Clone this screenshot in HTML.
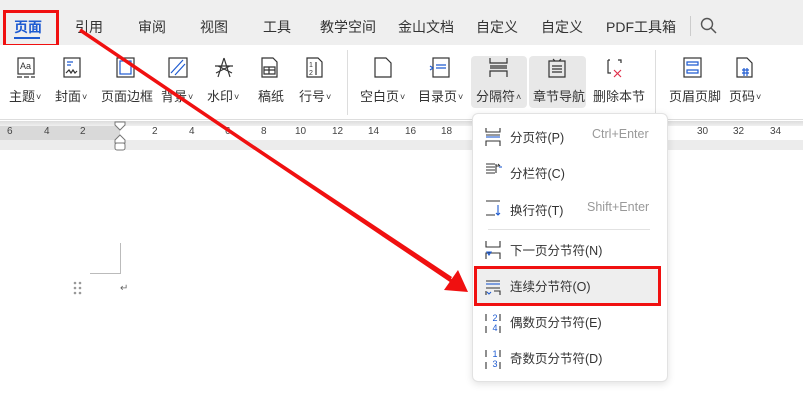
<!DOCTYPE html>
<html><head><meta charset="utf-8"><style>
*{margin:0;padding:0;box-sizing:border-box}
body{width:803px;height:404px;overflow:hidden;background:#fff;font-family:"Liberation Sans","Noto Sans CJK SC",sans-serif;color:#333;position:relative}
.a{position:absolute;white-space:nowrap}
.tab{position:absolute;top:17px;font-size:14px;color:#333}
.lbl{position:absolute;top:86px;font-size:13px;color:#333}
.c{font-size:9px;vertical-align:1px;margin-left:1px}
.num{position:absolute;top:126px;font-size:10px;color:#444}
.mi{position:absolute;left:510px;font-size:12.5px;color:#333}
.sc{position:absolute;font-size:12.5px;color:#999}
.dg{position:absolute;left:490px;font-size:9px;color:#1e5bd1;line-height:10px}
</style></head><body>
<div class="a" style="left:0;top:0;width:803px;height:45px;background:#efefef"></div>
<div class="tab" style="left:14px;color:#1e5bd1;font-weight:bold">页面</div>
<div class="a" style="left:14px;top:37px;width:26px;height:2px;background:#1e5bd1"></div>
<div class="tab" style="left:75px">引用</div>
<div class="tab" style="left:138px">审阅</div>
<div class="tab" style="left:200px">视图</div>
<div class="tab" style="left:263px">工具</div>
<div class="tab" style="left:320px">教学空间</div>
<div class="tab" style="left:398px">金山文档</div>
<div class="tab" style="left:476px">自定义</div>
<div class="tab" style="left:541px">自定义</div>
<div class="tab" style="left:606px">PDF工具箱</div>
<div class="a" style="left:690px;top:16px;width:1px;height:20px;background:#ccc"></div>
<svg class="a" style="left:700px;top:17px" width="18" height="18"><circle cx="7" cy="7" r="5.5" fill="none" stroke="#555" stroke-width="1.4"/><path d="M11 11l5 5" stroke="#555" stroke-width="1.5"/></svg>
<div class="a" style="left:3px;top:10px;width:56px;height:37px;border:3px solid #f01010"></div>

<div class="a" style="left:0;top:45px;width:803px;height:75px;background:#fff;border-bottom:1px solid #ddd"></div>
<div class="a" style="left:471px;top:56px;width:56px;height:52px;background:#e8e8e8;border-radius:4px"></div>
<div class="a" style="left:529px;top:56px;width:57px;height:52px;background:#e8e8e8;border-radius:4px"></div>
<div class="a" style="left:347px;top:50px;width:1px;height:65px;background:#ddd"></div>
<div class="a" style="left:655px;top:50px;width:1px;height:65px;background:#ddd"></div>

<svg class="a" style="left:0;top:55px" width="803" height="30" fill="none" stroke="#333" stroke-width="1.2">
<rect x="18" y="3" width="16" height="16"/><text x="20" y="14" font-size="9" fill="#333" stroke="none" font-family="Liberation Sans">Aa</text><path d="M17 22h5M24 22h5M31 22h4"/>
<rect x="64" y="3" width="16" height="19"/><path d="M67 7h6M67 10h4" stroke="#1e5bd1"/><path d="M66 18l3-3 2 3 2-3 2 3 2-2"/>
<rect x="117" y="3" width="17" height="19"/><rect x="120" y="6" width="11" height="13" stroke="#1e5bd1"/>
<rect x="169" y="3" width="18" height="19"/><path d="M171 18l12-13M175 20l10-11" stroke="#1e5bd1"/>
<path d="M224 3l-6 19M224 3l6 19M215 11h18M216 18l14-7M218 11l14 7"/>
<path d="M262 3h11l4 4v15h-15z"/><path d="M264 12h11v7h-11zM269 12v7M264 15h11"/>
<path d="M307 3h11l4 4v15h-15z"/><text x="309" y="12" font-size="7" fill="#333" stroke="none">1</text><text x="309" y="20" font-size="7" fill="#333" stroke="none">2</text><path d="M316 7v13"/>
<path d="M375 3h11l5 5v14h-16z"/>
<rect x="433" y="3" width="16" height="19"/><path d="M436 10h10M436 13h10" stroke="#1e5bd1"/><path d="M430 11l3 2-3 2" stroke="#1e5bd1"/>
<path d="M490 3v5h17V3M490 22v-6h17v6M490 11h17M490 13h17"/>
<path d="M549 6h16v16h-16zM553 4l2 2M561 4l-2 2M552 11h10M552 14h10M552 17h10"/>
<path d="M608 5v13h3M618 5h3v3M608 5h2"/><path d="M614 15l7 7M621 15l-7 7" stroke="#e0304a"/>
<rect x="684" y="3" width="17" height="19"/><path d="M687 7h11v3h-11zM687 15h11v3h-11z" stroke="#1e5bd1"/>
<path d="M737 3h10l5 5v14h-15z"/><path d="M742 15h7M742 18h7M744 13v8M747 13v8" stroke="#1e5bd1"/>
</svg>
<div class="lbl" style="left:9px">主题<span class="c">˅</span></div>
<div class="lbl" style="left:55px">封面<span class="c">˅</span></div>
<div class="lbl" style="left:101px">页面边框</div>
<div class="lbl" style="left:161px">背景<span class="c">˅</span></div>
<div class="lbl" style="left:207px">水印<span class="c">˅</span></div>
<div class="lbl" style="left:258px">稿纸</div>
<div class="lbl" style="left:299px">行号<span class="c">˅</span></div>
<div class="lbl" style="left:360px">空白页<span class="c">˅</span></div>
<div class="lbl" style="left:418px">目录页<span class="c">˅</span></div>
<div class="lbl" style="left:476px">分隔符<span class="c">˄</span></div>
<div class="lbl" style="left:533px">章节导航</div>
<div class="lbl" style="left:593px">删除本节</div>
<div class="lbl" style="left:669px">页眉页脚</div>
<div class="lbl" style="left:729px">页码<span class="c">˅</span></div>

<div class="a" style="left:0;top:121px;width:803px;height:5px;background:linear-gradient(#ddd,#f0f0f0)"></div>
<div class="a" style="left:0;top:126px;width:803px;height:14px;background:#fff"></div>
<div class="a" style="left:0;top:126px;width:120px;height:14px;background:#d9d9d9"></div>
<div class="a" style="left:0;top:140px;width:803px;height:10px;background:#ececec"></div>
<div class="num" style="left:7px">6</div><div class="num" style="left:44px">4</div><div class="num" style="left:80px">2</div>
<div class="num" style="left:152px">2</div><div class="num" style="left:189px">4</div><div class="num" style="left:225px">6</div><div class="num" style="left:261px">8</div>
<div class="num" style="left:295px">10</div><div class="num" style="left:332px">12</div><div class="num" style="left:368px">14</div><div class="num" style="left:405px">16</div><div class="num" style="left:441px">18</div>
<div class="num" style="left:697px">30</div><div class="num" style="left:733px">32</div><div class="num" style="left:770px">34</div>
<svg class="a" style="left:112px;top:121px" width="16" height="30" fill="#fff" stroke="#777"><path d="M3 1h10v3l-5 5-5-5z"/><path d="M8 14l5 5v3H3v-3z"/><rect x="3" y="22" width="10" height="7" rx="2"/></svg>

<div class="a" style="left:120px;top:243px;width:1px;height:31px;background:#bbb"></div>
<div class="a" style="left:90px;top:273px;width:31px;height:1px;background:#bbb"></div>
<svg class="a" style="left:72px;top:280px" width="12" height="16" fill="#999"><circle cx="3" cy="3" r="1.3"/><circle cx="8" cy="3" r="1.3"/><circle cx="3" cy="8" r="1.3"/><circle cx="8" cy="8" r="1.3"/><circle cx="3" cy="13" r="1.3"/><circle cx="8" cy="13" r="1.3"/></svg>
<div class="a" style="left:120px;top:283px;font-size:10px;color:#666">↵</div>

<div class="a" style="left:472px;top:113px;width:196px;height:269px;background:#fff;border:1px solid #e2e2e2;border-radius:6px;box-shadow:0 2px 8px rgba(0,0,0,.12)"></div>
<div class="a" style="left:476px;top:268px;width:182px;height:36px;background:#eee;border-radius:3px"></div>
<div class="a" style="left:488px;top:229px;width:162px;height:1px;background:#e2e2e2"></div>
<svg class="a" style="left:484px;top:126px" width="20" height="245" fill="none" stroke="#333" stroke-width="1.1">
<path d="M2 2v4h14V2M2 20v-5h14v5M2 9h14" /><path d="M2 11h14" stroke="#1e5bd1"/>
<path d="M2 38h9M2 41h9M2 44h9M2 47h9M12 38v9M12 40h3M14 38l2 2" /><path d="M15 41h3" stroke="#1e5bd1"/>
<path d="M2 75h14M2 89h9" /><path d="M14 79v10M12 87l2 2 2-2" stroke="#1e5bd1"/>
<path d="M2 115v6h14v-6M2 133v-6h14v6" /><path d="M3 126l2 3 2-3z" stroke="#1e5bd1"/>
<path d="M2 155h14M2 162h14M2 165v4M10 165h6v4" /><path d="M2 158h14" stroke="#1e5bd1"/><path d="M3 166l2 2 2-2" stroke="#1e5bd1"/>
<path d="M2 188v7M16 188v7M2 200v7M16 200v7"/>
<path d="M2 224v7M16 224v7M2 236v7M16 236v7"/>
</svg>
<div class="dg" style="top:313px">&nbsp;2<br>&nbsp;4</div>
<div class="dg" style="top:349px">&nbsp;1<br>&nbsp;3</div>
<div class="mi" style="top:127px">分页符(P)</div><div class="sc" style="left:592px;top:127px">Ctrl+Enter</div>
<div class="mi" style="top:163px">分栏符(C)</div>
<div class="mi" style="top:200px">换行符(T)</div><div class="sc" style="left:587px;top:200px">Shift+Enter</div>
<div class="mi" style="top:240px">下一页分节符(N)</div>
<div class="mi" style="top:276px">连续分节符(O)</div>
<div class="mi" style="top:312px">偶数页分节符(E)</div>
<div class="mi" style="top:348px">奇数页分节符(D)</div>
<div class="a" style="left:474px;top:266px;width:187px;height:40px;border:3px solid #f01010"></div>

<svg class="a" style="left:0;top:0" width="803" height="404"><path d="M80 30L450 280L452 277L80 30z" fill="#f01010"/><path d="M80 30L456 284" stroke="#f01010" stroke-width="3.5"/><path d="M468 292L444 290L458 270z" fill="#f01010"/></svg>
</body></html>
